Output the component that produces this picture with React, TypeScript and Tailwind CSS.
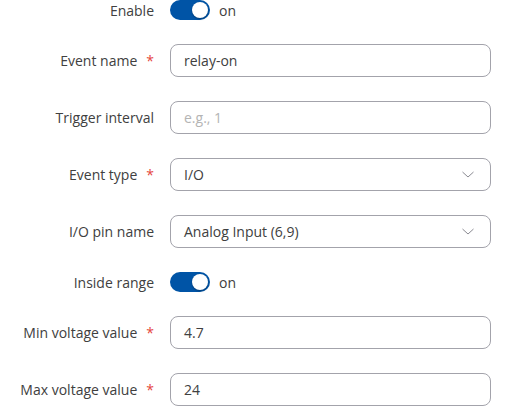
const font = { fontFamily: '"Open Sans", "Noto Sans", sans-serif' }

function Label({ text, required }: { text: string; required?: boolean }) {
  return (
    <div className="w-[154px] shrink-0 text-right text-[14px] text-[#404040]">
      {text}
      {required && <span className="ml-[9px] text-[#e5463b]">*</span>}
    </div>
  )
}

function Toggle() {
  return (
    <div className="flex items-center gap-[9px]">
      <div className="relative h-5 w-10 rounded-full bg-[#0054a6]">
        <div className="absolute right-[2px] top-[2px] h-4 w-4 rounded-full bg-white shadow-[0_1px_2px_rgba(0,0,0,0.3)]" />
      </div>
      <span className="text-[14px] text-[#404040]">on</span>
    </div>
  )
}

function Field({ value, placeholder, select }: { value?: string; placeholder?: string; select?: boolean }) {
  return (
    <div className="flex h-[33px] w-[321px] items-center justify-between rounded-lg border border-[#a3a3ab] bg-white pl-[13px] pr-[16px] text-[14px]">
      {value ? (
        <span className="text-[#404040]">{value}</span>
      ) : (
        <span className="text-[#b4b4b4]">{placeholder}</span>
      )}
      {select && (
        <svg width="12" height="7" viewBox="0 0 12 7" fill="none">
          <path d="M0.5 1l5.5 5 5.5-5" stroke="#8a8a92" strokeWidth="1" />
        </svg>
      )}
    </div>
  )
}

function Row({ children, label, required, tall }: { children: React.ReactNode; label: string; required?: boolean; tall?: boolean }) {
  return (
    <div className={`flex items-center gap-4 ${tall ? 'h-[33px]' : 'h-5'}`}>
      <Label text={label} required={required} />
      {children}
    </div>
  )
}

export default function App() {
  return (
    <div className="min-h-screen bg-white" style={font}>
      <div className="flex flex-col gap-6">
        <Row label="Enable">
          <Toggle />
        </Row>
        <Row label="Event name" required tall>
          <Field value="relay-on" />
        </Row>
        <Row label="Trigger interval" tall>
          <Field placeholder="e.g., 1" />
        </Row>
        <Row label="Event type" required tall>
          <Field value="I/O" select />
        </Row>
        <Row label="I/O pin name" tall>
          <Field value="Analog Input (6,9)" select />
        </Row>
        <Row label="Inside range">
          <Toggle />
        </Row>
        <Row label="Min voltage value" required tall>
          <Field value="4.7" />
        </Row>
        <Row label="Max voltage value" required tall>
          <Field value="24" />
        </Row>
      </div>
    </div>
  )
}
